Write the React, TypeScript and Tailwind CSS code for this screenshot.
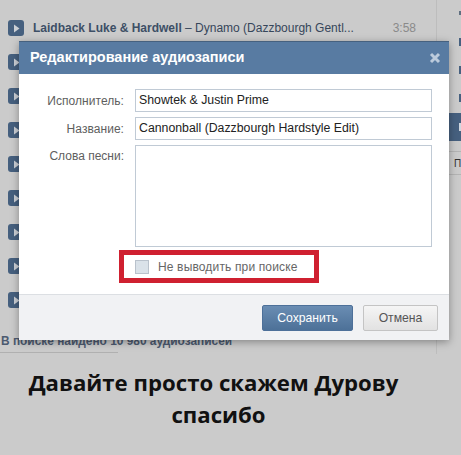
const rows = Array.from({ length: 9 }, (_, i) => i);

function Play() {
  return (
    <div className="flex h-4 w-4 items-center justify-center rounded-[3px] bg-[#46607f]">
      <svg width="7" height="9" viewBox="0 0 7 9"><path d="M1 0.5 L6.5 4.5 L1 8.5 Z" fill="#cbcfd5" /></svg>
    </div>
  );
}

function Field({ label, value }: { label: string; value: string }) {
  return (
    <div className="flex h-[23px] items-center">
      <div className="w-[105px] text-right text-[12px] tracking-[0.05px] text-[#5e5e5e]">{label}</div>
      <div className="ml-[11px] flex h-[23px] w-[297px] items-center border border-[#c0cad5] pl-[3px] text-[12.3px] text-[#222]">{value}</div>
    </div>
  );
}

export default function App() {
  return (
    <div className="relative h-[455px] w-[461px] overflow-hidden bg-[#cbcbcb] font-['Liberation_Sans',sans-serif]">
      <div className="flex h-[354px]">
        <div className="h-[354px] w-[437px] border-r border-[#bdbdbd]">
          <div className="flex h-[335px] flex-col pl-2 pt-[11px]">
            {rows.map((i) => (
              <div key={i} className="flex h-[34px] shrink-0 items-center">
                <Play />
                {i === 0 && (
                  <div className="ml-[9px] flex w-[388px] items-center justify-between text-[12px]">
                    <span className="text-[#36465a]">
                      <span className="font-bold text-[#3d4f66]">Laidback Luke &amp; Hardwell</span> – Dynamo (Dazzbourgh Gentl...
                    </span>
                    <span className="mr-[5px] text-[#8a8a8a]">3:58</span>
                  </div>
                )}
              </div>
            ))}
          </div>
          <div className="h-[18px] w-[118px] whitespace-nowrap border-b border-[#b0b0b0] pl-[1px] text-[11.9px] font-bold leading-[12px] text-[#4c5a70]">
            В поиске найдено 10 980 аудиозаписей
          </div>
        </div>
        <div className="flex flex-1 flex-col items-start pl-[22px] pt-[11px]">
          <div className="mb-[23px] h-[4px] w-[2px] bg-[#5f6f80]" />
          <div className="mb-[20px] h-[8px] w-[2px] bg-[#46607f]" />
          <div className="mb-[20px] h-[8px] w-[2px] bg-[#46607f]" />
          <div className="h-[8px] w-[2px] bg-[#46607f]" />
        </div>
      </div>

      <div className="absolute left-[449px] top-[113px] flex h-[28px] w-[12px] items-center justify-end bg-[#46607f]">
        <div className="h-[8px] w-[2px] bg-[#cfd6de]" />
      </div>
      <div className="absolute left-[449px] top-[151px] flex h-[24px] w-[12px] items-center border-y border-[#b4b4b4] pl-[5px] text-[10px] text-[#333]">П</div>

      <div className="absolute left-[19px] top-[41px] flex h-[299px] w-[430px] flex-col border-t border-[#46617f] bg-white shadow-[0_2px_8px_rgba(0,0,0,0.35)]">
        <div className="flex h-[32px] items-center justify-between bg-[#587ba2] pl-[11px] pr-[8px] text-[14.5px] font-bold text-white">
          <span>Редактирование аудиозаписи</span>
          <svg width="12" height="12" viewBox="0 0 12 12"><path d="M2 2 L10 10 M10 2 L2 10" stroke="#bccbdc" strokeWidth="3" /></svg>
        </div>
        <div className="flex flex-1 flex-col pt-[15px]">
          <div className="flex flex-col gap-[5px]">
            <Field label="Исполнитель:" value="Showtek & Justin Prime" />
            <Field label="Название:" value="Cannonball (Dazzbourgh Hardstyle Edit)" />
            <div className="flex">
              <div className="w-[105px] pt-[2px] text-right text-[12px] text-[#5e5e5e]">Слова песни:</div>
              <div className="ml-[11px] h-[102px] w-[297px] border border-[#c0cad5]" />
            </div>
          </div>
          <div className="ml-[100px] mt-[3px] flex h-[33px] w-[200px] items-center border-[5px] border-[#cf2030] pl-[11px]">
            <div className="h-[14px] w-[14px] border border-[#b9c2cc] bg-[#dae2e9]" />
            <span className="ml-[9px] text-[12px] tracking-[0.15px] text-[#666]">Не выводить при поиске</span>
          </div>
        </div>
        <div className="flex h-[46px] items-start justify-end gap-[10px] border-t border-[#dcdfe3] bg-[#f1f2f4] pr-[11px] pt-[10px]">
          <div className="flex h-[26px] w-[91px] items-center justify-center rounded-[2px] border border-[#4d7099] bg-gradient-to-b from-[#6a8db3] to-[#4d7198] text-[12.2px] text-white">Сохранить</div>
          <div className="flex h-[26px] w-[75px] items-center justify-center rounded-[2px] border border-[#c4c4c4] bg-gradient-to-b from-[#f5f5f5] to-[#e2e2e2] text-[12.2px] text-[#555]">Отмена</div>
        </div>
      </div>

      <div className="w-[427px] pt-[13px] text-center font-['Open_Sans',sans-serif] text-[22.2px] font-bold leading-[32px] text-[#111]">
        Давайте просто скажем Дурову
        <br />
        <span className="pl-[10px]">спасибо</span>
      </div>
    </div>
  );
}
